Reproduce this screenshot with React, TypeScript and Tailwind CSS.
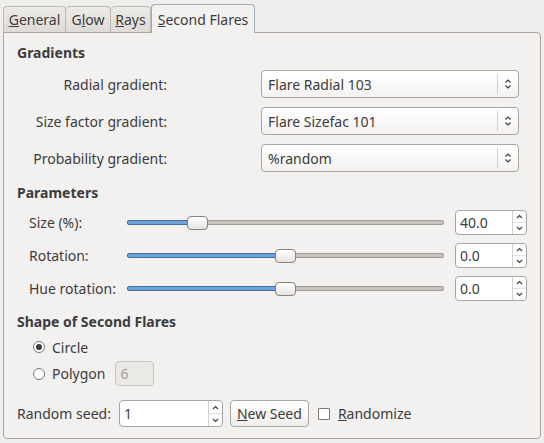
import React from 'react';

const font = { fontFamily: '"Noto Sans", "Open Sans", sans-serif' };

function UpDown() {
  return (
    <svg width="8" height="12" viewBox="0 0 8 12">
      <path d="M1.5 4.5 L4 2 L6.5 4.5" fill="none" stroke="#3c3c3c" strokeWidth="1.2" />
      <path d="M1.5 7.5 L4 10 L6.5 7.5" fill="none" stroke="#3c3c3c" strokeWidth="1.2" />
    </svg>
  );
}

function Combo({ value }: { value: string }) {
  return (
    <div className="flex items-center w-[258px] h-[28px] rounded-[4px] border border-[#aaa69f] bg-gradient-to-b from-white to-[#f3f2f0]">
      <span className="flex-1 pl-[6px] text-[14px] text-[#3c3c3c]">{value}</span>
      <div className="w-px h-[20px] bg-[#d3cfca]" />
      <div className="w-[20px] flex justify-center">
        <UpDown />
      </div>
    </div>
  );
}

function Spin({ value, w = 'w-[72px]', h = 'h-[25px]' }: { value: string; w?: string; h?: string }) {
  return (
    <div className={`flex items-stretch ${w} ${h} rounded-[4px] border border-[#a9a59f] bg-white`}>
      <span className="flex-1 flex items-center pl-[4px] text-[14px] text-[#3c3c3c]">{value}</span>
      <div className="w-[14px] flex flex-col border-l border-[#d3cfca]">
        <div className="flex-1 flex items-center justify-center border-b border-[#e4e1dd]">
          <svg width="7" height="5" viewBox="0 0 7 5"><path d="M1 4 L3.5 1.5 L6 4" fill="none" stroke="#3c3c3c" strokeWidth="1.1" /></svg>
        </div>
        <div className="flex-1 flex items-center justify-center">
          <svg width="7" height="5" viewBox="0 0 7 5"><path d="M1 1 L3.5 3.5 L6 1" fill="none" stroke="#3c3c3c" strokeWidth="1.1" /></svg>
        </div>
      </div>
    </div>
  );
}

function Slider({ pos }: { pos: number }) {
  // pos = thumb left offset within track (px)
  return (
    <div className="relative w-[317px] h-[14px] flex items-center">
      <div className="w-full h-[5px] rounded-[2px] border border-[#9e9a94] bg-[#c8c4bd]" />
      <div
        className="absolute left-0 top-[4.5px] h-[5px] rounded-[2px] border border-[#3f6fa3] bg-[#6ea2d6]"
        style={{ width: pos + 4 }}
      />
      <div
        className="absolute top-0 w-[21px] h-[14px] rounded-[4px] border border-[#85817b] bg-gradient-to-b from-white to-[#e6e4e1]"
        style={{ left: pos }}
      />
    </div>
  );
}

function GradRow({ label, value }: { label: string; value: string }) {
  return (
    <div className="flex items-center">
      <div className="w-[150px] text-right text-[14px] text-[#3c3c3c]">{label}</div>
      <div className="ml-[94px]">
        <Combo value={value} />
      </div>
    </div>
  );
}

function SliderRow({ label, pos, value }: { label: string; pos: number; value: string }) {
  return (
    <div className="flex items-center h-[25px]">
      <div className="w-[110px] pl-[12px] text-[14px] text-[#3c3c3c]">{label}</div>
      <Slider pos={pos} />
      <div className="ml-[11px]">
        <Spin value={value} />
      </div>
    </div>
  );
}

export default function App() {
  return (
    <div className="w-[544px] h-[443px] bg-[#efeeec] pt-[3px] pl-[3px] overflow-hidden text-[#3c3c3c]" style={font}>
      {/* tabs */}
      <div className="flex items-end h-[29px] text-[14px]">
        <div className="h-[26px] w-[63px] justify-center flex items-center rounded-t-[4px] border border-b-0 border-[#bcb8b2] bg-gradient-to-b from-[#edebe8] to-[#dedbd7]">
          <span><u>G</u>eneral</span>
        </div>
        <div className="h-[26px] w-[45px] justify-center flex items-center rounded-t-[4px] border border-b-0 border-l-0 border-[#bcb8b2] bg-gradient-to-b from-[#edebe8] to-[#dedbd7]">
          <span>G<u>l</u>ow</span>
        </div>
        <div className="h-[26px] w-[40px] justify-center flex items-center rounded-t-[4px] border border-b-0 border-l-0 border-[#bcb8b2] bg-gradient-to-b from-[#edebe8] to-[#dedbd7]">
          <span><u>R</u>ays</span>
        </div>
        <div className="relative z-10 h-[29px] w-[104px] justify-center -mb-px flex items-center rounded-t-[4px] border border-b-0 border-[#9fadbd] bg-[#f2f1f0]">
          <span><u>S</u>econd Flares</span>
        </div>
      </div>
      {/* panel */}
      <div className="w-[538px] h-[407px] rounded-b-[4px] rounded-tr-[4px] border border-[#aaa69f] bg-[#f2f1f0] pl-[13px] pt-[10px] text-[14px]">
        <div className="font-bold leading-[20px]">Gradients</div>
        <div className="mt-[7px] flex flex-col gap-[9px]">
          <GradRow label="Radial gradient:" value="Flare Radial 103" />
          <GradRow label="Size factor gradient:" value="Flare Sizefac 101" />
          <GradRow label="Probability gradient:" value="%random" />
        </div>
        <div className="mt-[11px] font-bold leading-[20px]">Parameters</div>
        <div className="mt-[7px] flex flex-col gap-[8px]">
          <SliderRow label="Size (%):" pos={60} value="40.0" />
          <SliderRow label="Rotation:" pos={148} value="0.0" />
          <SliderRow label="Hue rotation:" pos={148} value="0.0" />
        </div>
        <div className="mt-[11px] font-bold leading-[20px]">Shape of Second Flares</div>
        <div className="mt-[5px] flex items-center h-[20px] pl-[16px]">
          <div className="w-[12px] h-[12px] rounded-full border border-[#7b7772] bg-white flex items-center justify-center">
            <div className="w-[6px] h-[6px] rounded-full bg-[#3c3c3c]" />
          </div>
          <span className="ml-[7px]">Circle</span>
        </div>
        <div className="mt-[4px] flex items-center h-[25px] pl-[16px]">
          <div className="w-[12px] h-[12px] rounded-full border border-[#7b7772] bg-white" />
          <span className="ml-[7px]">Polygon</span>
          <div className="ml-[10px] w-[39px] h-[25px] rounded-[4px] border border-[#c7c3bd] bg-[#ebe9e6] flex items-center pl-[4px] text-[#a19d97]">6</div>
        </div>
        <div className="mt-[14px] flex items-center h-[27px]">
          <span>Random seed:</span>
          <div className="ml-[8px]">
            <Spin value="1" w="w-[104px]" h="h-[27px]" />
          </div>
          <div className="ml-[7px] h-[27px] w-[79px] justify-center flex items-center rounded-[4px] border border-[#a9a59f] bg-gradient-to-b from-white to-[#f0eeeb]">
            <span><u>N</u>ew Seed</span>
          </div>
          <div className="ml-[9px] w-[12px] h-[12px] border border-[#7b7772] bg-white rounded-[1px]" />
          <span className="ml-[8px]"><u>R</u>andomize</span>
        </div>
      </div>
    </div>
  );
}
